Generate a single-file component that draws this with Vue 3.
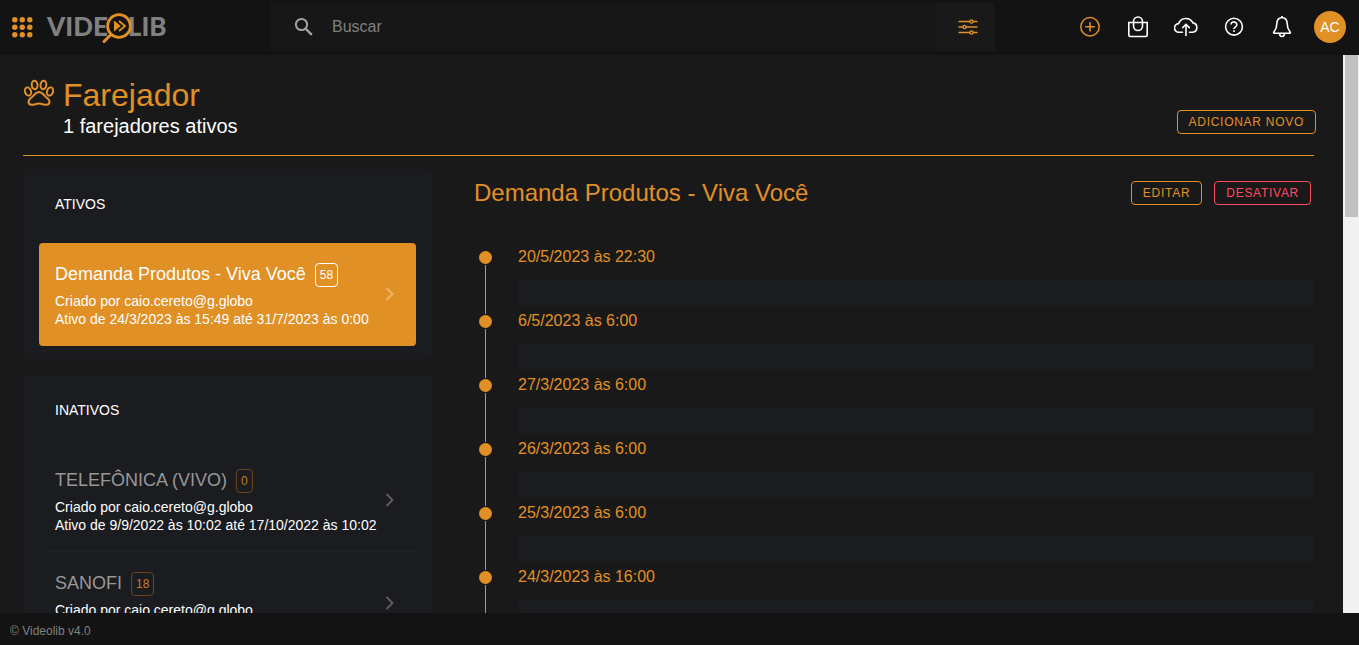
<script setup>
const lists = [
  {
    title: 'ATIVOS',
    items: [
      { name: 'Demanda Produtos - Viva Você', count: 58, period: 'Ativo de 24/3/2023 às 15:49 até 31/7/2023 às 0:00', selected: true },
    ],
  },
  {
    title: 'INATIVOS',
    items: [
      { name: 'TELEFÔNICA (VIVO)', count: 0, period: 'Ativo de 9/9/2022 às 10:02 até 17/10/2022 às 10:02' },
      { name: 'SANOFI', count: 18, period: '' },
    ],
  },
]
const events = [
  '20/5/2023 às 22:30',
  '6/5/2023 às 6:00',
  '27/3/2023 às 6:00',
  '26/3/2023 às 6:00',
  '25/3/2023 às 6:00',
  '24/3/2023 às 16:00',
]
const dots = [2.8, 10.3, 17.8]
</script>

<template>
  <div class="app">
    <header class="topbar">
      <div class="brand">
        <button class="icon-btn" aria-label="Menu">
          <svg width="21" height="21" viewBox="0 0 21 21" fill="#e19026">
            <template v-for="y in dots" :key="y">
              <circle v-for="x in dots" :key="x" :cx="x" :cy="y" r="2.7" />
            </template>
          </svg>
        </button>
        <a class="logo" href="#" aria-label="Videolib">
          <span>VIDE</span>
          <svg class="lens" width="30" height="32" viewBox="0 0 30 32" fill="none">
            <path d="M9 21.500 2 28.500" stroke="#e19026" stroke-width="3" stroke-linecap="round" />
            <circle cx="17" cy="13" r="11.400" fill="#131313" stroke="#e19026" stroke-width="2.800" />
            <path d="M12 7.500 18.800 13 12 18.500Z" fill="#e19026" />
            <path d="m17 8 6 5-6 5" stroke="#e19026" stroke-width="1.800" />
          </svg>
          <span>LIB</span>
        </a>
      </div>
      <form class="search" @submit.prevent>
        <button class="icon-btn find" aria-label="Pesquisar">
          <svg width="20" height="20" viewBox="0 0 20 20" fill="none" stroke="#a3a3a3">
            <circle cx="7.500" cy="7.500" r="5.600" stroke-width="2" />
            <path d="m11.500 11.500 6.300 6.300" stroke-width="2.400" />
          </svg>
        </button>
        <input type="text" placeholder="Buscar" aria-label="Buscar">
        <button class="icon-btn filter" aria-label="Filtros">
          <svg width="20" height="18" viewBox="0 0 20 18" fill="#191919" stroke="#e19026" stroke-width="1.400">
            <path d="M1 3.500h18M1 9h18M1 14.500h18" stroke-linecap="round" />
            <circle cx="13.500" cy="3.500" r="1.600" />
            <circle cx="6.500" cy="9" r="1.600" />
            <circle cx="13.500" cy="14.500" r="1.600" />
          </svg>
        </button>
      </form>
      <nav class="actions" aria-label="Ações">
        <button class="icon-btn" aria-label="Adicionar">
          <svg width="24" height="24" viewBox="0 0 24 24" fill="none" stroke="#e19026" stroke-width="1.500">
            <circle cx="12" cy="11.700" r="9.200" />
            <path d="M12 7.500v8.500M7.700 11.700h8.600" stroke-linecap="round" />
          </svg>
        </button>
        <button class="icon-btn" aria-label="Sacola">
          <svg width="24" height="24" viewBox="0 0 24 24" fill="none" stroke="#fff" stroke-width="1.600">
            <path d="M2.800 7.500h18.400v12.300q0 1.700-1.700 1.700h-15q-1.700 0-1.700-1.700Z" />
            <path d="M7.500 11V6.500a4.500 4.500 0 0 1 9 0V11a4.500 4.500 0 0 1-9 0Z" />
          </svg>
        </button>
        <button class="icon-btn" aria-label="Enviar">
          <svg width="24" height="24" viewBox="0 0 24 24" fill="none" stroke="#fff" stroke-width="1.600" stroke-linecap="round">
            <path d="M8.500 17.200H5a4.300 4.300 0 0 1-.4-8.600 7.800 7.800 0 0 1 14.300-.7 4.700 4.700 0 0 1-.2 9.300h-3.200" />
            <path d="M12 20.500V9.500M8.700 12.600 12 9.300l3.300 3.300" />
          </svg>
        </button>
        <button class="icon-btn" aria-label="Ajuda">
          <svg width="24" height="24" viewBox="0 0 24 24" fill="none" stroke="#fff" stroke-width="1.600">
            <circle cx="12" cy="11.700" r="8.400" />
            <path d="M9 9.600a2.900 2.700 0 1 1 4.700 2.100c-1 .8-1.700 1.100-1.700 2.400M12 15.200v1.800" />
          </svg>
        </button>
        <button class="icon-btn" aria-label="Notificações">
          <svg width="24" height="24" viewBox="0 0 24 24" fill="none" stroke="#fff" stroke-width="1.600" stroke-linejoin="round">
            <path d="M12 2.500c-3.600.4-5.200 3-5.200 6.300 0 5-1.400 6.200-3 8.200q-.6 1.200.5 1.200h15.400q1.100 0 .5-1.200c-1.600-2-3-3.200-3-8.200 0-3.300-1.600-5.900-5.200-6.300Z" />
            <path d="M9.600 18.500a2.400 3 0 0 0 4.800 0M12 1v1.800" />
          </svg>
        </button>
        <button class="avatar">AC</button>
      </nav>
    </header>

    <div class="viewport">
      <main class="page">
        <div class="page-head">
          <svg class="paw" width="32" height="30" viewBox="0 0 32 30" fill="none" stroke="#e19026" stroke-width="2">
            <ellipse cx="5" cy="12.500" rx="3" ry="4.200" transform="rotate(-18 5 12.500)" />
            <ellipse cx="11.600" cy="6" rx="2.900" ry="4.200" transform="rotate(-6 11.600 6)" />
            <ellipse cx="20.400" cy="6" rx="2.900" ry="4.200" transform="rotate(6 20.400 6)" />
            <ellipse cx="27" cy="12.500" rx="3" ry="4.200" transform="rotate(18 27 12.500)" />
            <path d="M16 13c-3.500 0-5 3.500-7.200 5.300-2.300 1.700-3.300 2.700-3.300 4.500 0 2 1.500 3 3.300 3 2.700 0 4.200-1.200 7.200-1.200s4.500 1.200 7.200 1.200c1.800 0 3.300-1 3.300-3 0-1.800-1-2.800-3.300-4.500C21 16.500 19.500 13 16 13Z" />
          </svg>
          <div class="titles">
            <h1>Farejador</h1>
            <p>1 farejadores ativos</p>
          </div>
          <button class="btn">ADICIONAR NOVO</button>
        </div>

        <div class="columns">
          <aside>
            <section v-for="list in lists" :key="list.title" class="card">
              <h2>{{ list.title }}</h2>
              <ul>
                <li v-for="item in list.items" :key="item.name" class="sniffer" :class="{ selected: item.selected }">
                  <div class="info">
                    <h3><span>{{ item.name }}</span> <span class="badge">{{ item.count }}</span></h3>
                    <p>Criado por caio.cereto@g.globo</p>
                    <p>{{ item.period }}</p>
                  </div>
                  <svg class="chevron" width="10" height="14" viewBox="0 0 10 14" fill="none" stroke="currentColor" stroke-width="1.800">
                    <path d="m1.500 1 6 6-6 6" />
                  </svg>
                </li>
              </ul>
            </section>
          </aside>

          <section class="detail">
            <div class="detail-head">
              <h2>Demanda Produtos - Viva Você</h2>
              <button class="btn">EDITAR</button>
              <button class="btn danger">DESATIVAR</button>
            </div>
            <ol class="timeline">
              <li v-for="event in events" :key="event">
                <div class="marker"><i class="dot"></i><i class="line"></i></div>
                <div class="event">
                  <time>{{ event }}</time>
                  <div class="bar"></div>
                </div>
              </li>
            </ol>
          </section>
        </div>
      </main>
      <div class="scroll-track"><div class="scroll-thumb"></div></div>
    </div>

    <footer>© Videolib v4.0</footer>
  </div>
</template>

<style>
body {
  margin: 0;
  background: #191919;
}
</style>

<style scoped>
* {
  box-sizing: border-box;
}
.app {
  display: flex;
  flex-direction: column;
  height: 100vh;
  overflow: hidden;
  background: #191919;
  color: #fff;
  font-family: "Liberation Sans", Arial, sans-serif;
}
h1, h2, h3, p, ul, ol {
  margin: 0;
  padding: 0;
  font-weight: 400;
  list-style: none;
}
button {
  font-family: inherit;
  cursor: pointer;
}
svg {
  display: block;
  flex: none;
}
.topbar {
  display: flex;
  align-items: center;
  flex: none;
  height: 55px;
  padding-bottom: 1px;
  background: #131313;
}
.icon-btn {
  display: flex;
  align-items: center;
  justify-content: center;
  padding: 0;
  border: 0;
  background: none;
}
.brand {
  display: flex;
  align-items: center;
  gap: 14px;
  width: 270px;
  padding-left: 12px;
}
.logo {
  display: flex;
  align-items: center;
  color: #808080;
  font: 900 26px/32px Lato, sans-serif;
  text-decoration: none;
}
.logo span {
  margin-top: -2px;
}
.lens {
  position: relative;
  margin: 4px -4px 0 -6px;
}
.search {
  display: flex;
  flex: 1;
  height: 48px;
  background: #171717;
}
.find {
  width: 62px;
  padding-left: 6px;
}
.search input {
  flex: 1;
  min-width: 0;
  padding: 0;
  border: 0;
  outline: 0;
  background: none;
  color: #fff;
  font: 16px "Liberation Sans", Arial, sans-serif;
}
.search input::placeholder {
  color: #808080;
  opacity: 1;
}
.filter {
  width: 58px;
  padding-right: 6px;
  padding-left: 12px;
  background: #191919;
}
.actions {
  display: flex;
  align-items: center;
  justify-content: flex-end;
  gap: 24px;
  width: 365px;
  padding-right: 13px;
}
.avatar {
  width: 32px;
  height: 32px;
  margin-left: -4px;
  padding: 0;
  border: 0;
  border-radius: 50%;
  background: #e19026;
  color: #fff;
  font-size: 14px;
}
.viewport {
  display: flex;
  flex: 1;
  min-height: 0;
  overflow: hidden;
}
.page {
  flex: 1;
  min-width: 0;
  padding: 21px 29px 0 23px;
}
.scroll-track {
  width: 16px;
  padding: 0 1px 0 2px;
  background: #f1f1f1;
}
.scroll-thumb {
  height: 29%;
  background: #c1c1c1;
}
.page-head {
  display: flex;
  align-items: flex-end;
  height: 80px;
  border-bottom: 1px solid #e19026;
}
.paw {
  align-self: flex-start;
  margin-top: 3px;
}
.titles {
  flex: 1;
  align-self: flex-start;
  padding-left: 8px;
}
h1 {
  color: #e19026;
  font-size: 32px;
  line-height: 38px;
}
.titles p {
  font-size: 20px;
  line-height: 24px;
}
.btn {
  height: 24px;
  padding: 0 11px;
  border: 1px solid #e19026;
  border-radius: 4px;
  background: none;
  color: #e19026;
  font-size: 12px;
  line-height: 22px;
  letter-spacing: 0.06em;
  white-space: nowrap;
}
.page-head .btn {
  margin: 0 -2px 21px 0;
}
.btn.danger {
  border-color: #ff4961;
  color: #ff4961;
}
.columns {
  display: grid;
  grid-template-columns: minmax(0, 409fr) minmax(0, 840fr);
  gap: 42px;
  padding-top: 13px;
}
.card {
  margin-bottom: 16px;
  padding: 26px 16px 13px;
  border-radius: 4px;
  background: #1b1c20;
}
.card h2 {
  margin-bottom: 30px;
  padding-left: 16px;
  font-size: 14px;
  line-height: 18px;
}
.sniffer {
  display: flex;
  align-items: center;
  padding: 20px 21px 18px 16px;
  background: linear-gradient(#202125, #202125) 4px 100% / 100% 1px no-repeat;
}
.sniffer.selected {
  border-radius: 4px;
  background: #e19026;
}
.info {
  flex: 1;
  min-width: 0;
}
h3 {
  display: flex;
  gap: 9px;
  margin-bottom: 5px;
  color: #989898;
  font-size: 18px;
  line-height: 22px;
}
.selected h3 {
  color: #fff;
}
.badge {
  height: 24px;
  padding: 0 4px;
  border: 1px solid #68451f;
  border-radius: 4px;
  color: #c47d22;
  font-size: 12px;
  line-height: 22px;
}
.selected .badge {
  border-color: #fff;
  color: #fff;
}
.info p {
  min-height: 18px;
  font-size: 14px;
  line-height: 18px;
  white-space: nowrap;
}
.chevron {
  margin-bottom: 4px;
  color: #606164;
}
.selected .chevron {
  color: #edb56c;
}
.detail-head {
  display: flex;
  align-items: center;
  gap: 12px;
  height: 24px;
  margin: 12px 3px 45px 0;
}
.detail-head h2 {
  flex: 1;
  color: #e19026;
  font-size: 24px;
  line-height: 24px;
}
.timeline li {
  display: flex;
  gap: 26px;
  height: 64px;
}
.marker {
  display: flex;
  flex-direction: column;
  align-items: center;
  gap: 1px;
  width: 13px;
  margin-left: 5px;
  padding-top: 1px;
}
.dot {
  width: 13px;
  height: 13px;
  border-radius: 50%;
  background: #e19026;
}
.line {
  flex: 1;
  width: 1px;
  background: #e19026;
}
.event {
  flex: 1;
}
time {
  display: block;
  color: #e19026;
  font-size: 16px;
  line-height: 14px;
}
.bar {
  height: 26px;
  margin-top: 16px;
  border-radius: 4px;
  background: #1b1c20;
}
footer {
  flex: none;
  height: 32px;
  padding: 2px 10px 0;
  background: #131313;
  color: #808080;
  font-size: 12px;
  line-height: 32px;
}
</style>
